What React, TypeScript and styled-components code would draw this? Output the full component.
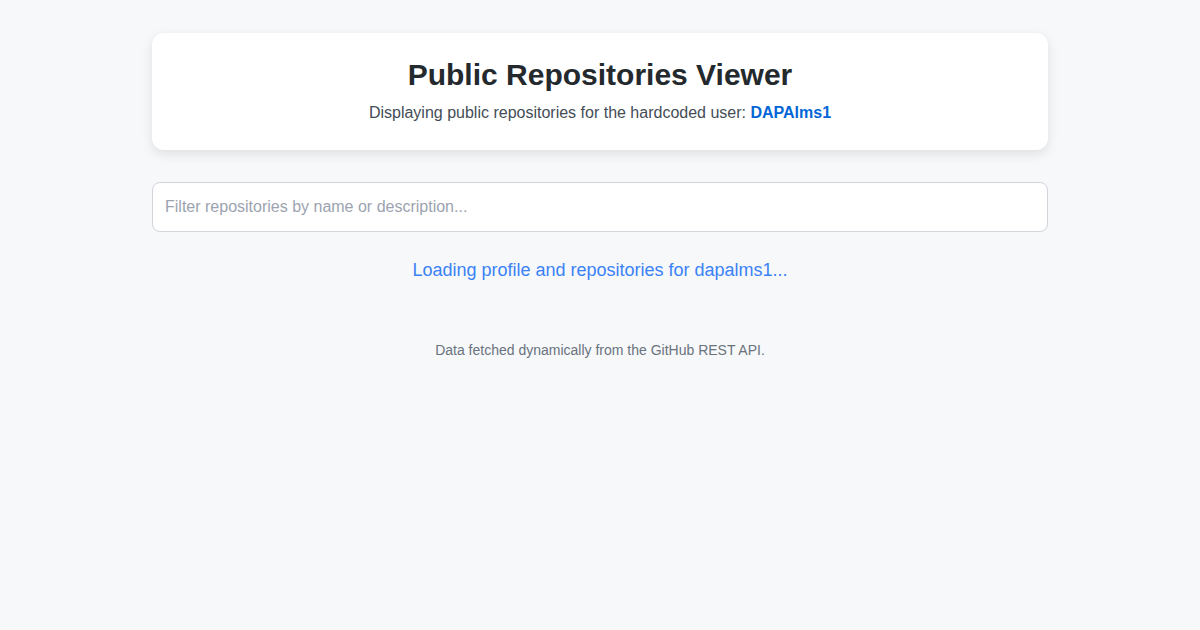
import styled, { createGlobalStyle } from "styled-components";

const GlobalStyle = createGlobalStyle`
  body {
    margin: 0;
    background-color: #f6f8fa;
    font-family: "Liberation Sans", Arial, Helvetica, sans-serif;
    color: #24292e;
  }
`;

const Page = styled.div`
  max-width: 896px;
  margin: 0 auto;
  padding: 33px 0 32px;
`;

const HeaderCard = styled.header`
  background-color: #ffffff;
  border-radius: 12px;
  box-shadow: 0 4px 12px rgba(0, 0, 0, 0.1);
  padding: 24px 24px 25px;
  text-align: center;
`;

const Title = styled.h1`
  margin: 0 0 8px;
  font-size: 30px;
  line-height: 36px;
  font-weight: 700;
  color: #24292e;
`;

const Subtitle = styled.p`
  margin: 0;
  font-size: 16px;
  line-height: 24px;
  color: #444d56;
`;

const UserName = styled.strong`
  color: #0366d6;
  font-weight: 700;
`;

const FilterInput = styled.input`
  display: block;
  box-sizing: border-box;
  width: 100%;
  margin-top: 32px;
  padding: 12px;
  font-family: inherit;
  font-size: 16px;
  line-height: 24px;
  color: #24292e;
  background-color: #ffffff;
  border: 1px solid #d1d5da;
  border-radius: 8px;
  outline: none;

  &::placeholder {
    color: #9ca3af;
  }
`;

const Status = styled.p<{ $tone?: "info" | "error" }>`
  margin: 25px 0 0;
  text-align: center;
  font-size: 18px;
  line-height: 27px;
  color: ${(p) => (p.$tone === "error" ? "#d73a49" : "#3b82f6")};
`;

const Footer = styled.footer`
  margin-top: 56px;
  text-align: center;
  font-size: 14px;
  line-height: 21px;
  color: #6a737d;
`;

export default function App() {
  const user = "DAPAlms1";
  return (
    <>
      <GlobalStyle />
      <Page>
        <HeaderCard>
          <Title>Public Repositories Viewer</Title>
          <Subtitle>
            Displaying public repositories for the hardcoded user:{" "}
            <UserName>{user}</UserName>
          </Subtitle>
        </HeaderCard>
        <FilterInput
          type="text"
          placeholder="Filter repositories by name or description..."
        />
        <Status $tone="info">
          Loading profile and repositories for {user.toLowerCase()}...
        </Status>
        <Footer>Data fetched dynamically from the GitHub REST API.</Footer>
      </Page>
    </>
  );
}
